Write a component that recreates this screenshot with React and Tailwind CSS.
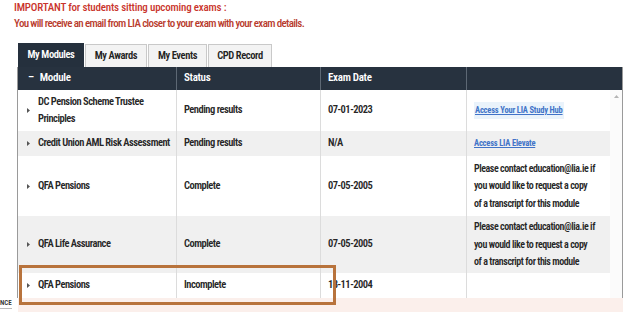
import React from "react";

const FONT = { fontFamily: "'Roboto Condensed', Roboto, sans-serif" };

const rows = [
  {
    module: ["DC Pension Scheme Trustee", "Principles"],
    status: "Pending results",
    date: "07-01-2023",
    link: "Access Your LIA Study Hub",
    hl: true,
    h: "h-[41px]",
  },
  {
    module: ["Credit Union AML Risk Assessment"],
    status: "Pending results",
    date: "N/A",
    link: "Access LIA Elevate",
    gray: true,
    h: "h-[25px]",
  },
  {
    module: ["QFA Pensions"],
    status: "Complete",
    date: "07-05-2005",
    note: true,
    h: "h-[60px]",
  },
  {
    module: ["QFA Life Assurance"],
    status: "Complete",
    date: "07-05-2005",
    note: true,
    gray: true,
    h: "h-[57px]",
  },
  {
    module: ["QFA Pensions"],
    status: "Incomplete",
    date: "18-11-2004",
    h: "h-[25px]",
  },
];

const tabs = [
  { label: "My Modules", w: "w-[66px]", active: true },
  { label: "My Awards", w: "w-[62px]" },
  { label: "My Events", w: "w-[59px]" },
  { label: "CPD Record", w: "w-[64px]" },
];

function Arrow() {
  return (
    <svg width="3" height="5" viewBox="0 0 3 5" className="shrink-0 mr-[8px]">
      <path d="M0 0 L3 2.5 L0 5 Z" fill="#555" />
    </svg>
  );
}

export default function App() {
  return (
    <div
      className="relative w-[633px] h-[312px] overflow-hidden bg-white text-[#262626]"
      style={FONT}
    >
      {/* notice */}
      <div className="pl-[14px] text-[11px] leading-[16px] font-medium text-[#c9342c]">
        <p className="tracking-[-0.2px]">
          IMPORTANT for students sitting upcoming exams :
        </p>
        <p className="tracking-[-0.64px] text-[#b83a2c]">
          You will receive an email from LIA closer to your exam with your exam
          details.
        </p>
      </div>

      {/* tabs */}
      <div className="mt-[11px] pl-[18px] flex items-end gap-[1px] h-[24px]">
        {tabs.map((t) => (
          <div
            key={t.label}
            className={`${t.w} flex items-center justify-center text-[10.5px] font-semibold tracking-[-0.4px] ${
              t.active
                ? "h-[24px] bg-[#25303d] text-white"
                : "h-[23px] bg-[#f3f3f3] border border-b-0 border-[#c9c9c9] text-[#222]"
            }`}
          >
            {t.label}
          </div>
        ))}
      </div>

      {/* table */}
      <div className="ml-[17px] w-[606px] border-l border-r border-[#9a9a9a]">
        <div className="grid grid-cols-[158px_144px_146px_1fr] h-[23px] bg-[#27323f] text-white text-[11px] font-semibold tracking-[-0.3px]">
          <div className="flex items-center pl-[10px]">
            <span className="mr-[6px]">–</span>Module
          </div>
          <div className="flex items-center pl-[7px] border-l border-[#5d6874]">
            Status
          </div>
          <div className="flex items-center pl-[7px] border-l border-[#5d6874]">
            Exam Date
          </div>
          <div className="border-l border-[#5d6874]" />
        </div>

        <div className="flex h-[208px]">
          <div className="w-[592px]">
            {rows.map((r, i) => (
              <div
                key={i}
                className={`${r.h} grid grid-cols-[158px_144px_146px_1fr] text-[10.5px] font-semibold leading-[16.5px] tracking-[-0.5px] ${
                  r.gray ? "bg-[#f0f0f0]" : "bg-white"
                }`}
              >
                <div className="flex items-center pl-[9px]">
                  <Arrow />
                  <div>
                    {r.module.map((m) => (
                      <div key={m}>{m}</div>
                    ))}
                  </div>
                </div>
                <div className="flex items-center pl-[7px] border-l border-[#dcdcdc]">
                  {r.status}
                </div>
                <div className="flex items-center pl-[7px] border-l border-[#dcdcdc]">
                  {r.date}
                </div>
                <div className="flex items-center pl-[7px] pr-[4px] border-l border-[#dcdcdc]">
                  {r.link && (
                    <span
                      className={`text-[8.5px] font-bold tracking-[-0.2px] text-[#4173c8] underline ${
                        r.hl ? "bg-[#eaf3fb] px-[1px]" : ""
                      }`}
                    >
                      {r.link}
                    </span>
                  )}
                  {r.note && (
                    <div className="text-[10px] leading-[17.5px] tracking-[-0.45px]">
                      <div>Please contact education@lia.ie if</div>
                      <div>you would like to request a copy</div>
                      <div>of a transcript for this module</div>
                    </div>
                  )}
                </div>
              </div>
            ))}
          </div>
          {/* scrollbar */}
          <div className="flex-1 bg-[#fbfbfb] flex justify-center pt-[5px]">
            <svg width="5" height="3" viewBox="0 0 5 3">
              <path d="M0 3 L2.5 0 L5 3 Z" fill="#b5b5b5" />
            </svg>
          </div>
        </div>
      </div>
      <div className="ml-[18px] w-[605px] h-[20px] bg-[#fbefeb]" />

      {/* cut-off label bottom left */}
      <div className="absolute left-0 top-[299px] text-[7px] font-semibold leading-[9px] text-[#333] border-b border-[#bbb]">
        NCE
      </div>

      {/* highlight box */}
      <div className="absolute left-[19px] top-[265px] w-[317px] h-[40px] border-[3px] border-[#b8733c]" />
    </div>
  );
}
